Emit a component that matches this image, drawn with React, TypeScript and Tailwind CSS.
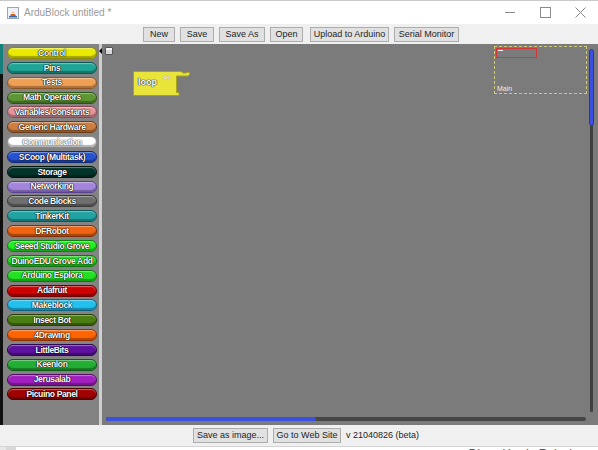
import React from "react";

const categories = [
  { name: "Control", bg: "bg-[#eaea00]", border: "border-[#8a8a00]" },
  { name: "Pins", bg: "bg-[#1fa596]", border: "border-[#0e5a52]" },
  { name: "Tests", bg: "bg-[#f0a055]", border: "border-[#8a5520]" },
  { name: "Math Operators", bg: "bg-[#5d9632]", border: "border-[#2f5515]" },
  { name: "Variables/Constants", bg: "bg-[#e4939b]", border: "border-[#8a4a52]" },
  { name: "Generic Hardware", bg: "bg-[#cd7d3e]", border: "border-[#6d3d15]" },
  { name: "Communication", bg: "bg-[#ffffff]", border: "border-[#8a8a8a]", light: true },
  { name: "SCoop (Multitask)", bg: "bg-[#2452d2]", border: "border-[#102a7a]" },
  { name: "Storage", bg: "bg-[#03332a]", border: "border-[#001510]" },
  { name: "Networking", bg: "bg-[#a385de]", border: "border-[#5a4090]" },
  { name: "Code Blocks", bg: "bg-[#6f6f6f]", border: "border-[#3a3a3a]" },
  { name: "TinkerKit", bg: "bg-[#22a3a3]", border: "border-[#0f5858]" },
  { name: "DFRobot", bg: "bg-[#ee6412]", border: "border-[#803008]" },
  { name: "Seeed Studio Grove", bg: "bg-[#22ee22]", border: "border-[#108010]" },
  { name: "DuinoEDU Grove Add", bg: "bg-[#22dd22]", border: "border-[#107510]" },
  { name: "Arduino Esplora", bg: "bg-[#22e022]", border: "border-[#107510]" },
  { name: "Adafruit", bg: "bg-[#cf0202]", border: "border-[#700000]" },
  { name: "Makeblock", bg: "bg-[#22c0ee]", border: "border-[#106080]" },
  { name: "Insect Bot", bg: "bg-[#4c7f12]", border: "border-[#254008]" },
  { name: "4Drawing", bg: "bg-[#ff6403]", border: "border-[#903000]" },
  { name: "LittleBits", bg: "bg-[#5e119e]", border: "border-[#2e0850]" },
  { name: "Keenlon", bg: "bg-[#22ae32]", border: "border-[#105a18]" },
  { name: "Jerusalab", bg: "bg-[#a21fc2]", border: "border-[#520f62]" },
  { name: "Picuino Panel", bg: "bg-[#a00202]", border: "border-[#500000]" },
];

function WinButton({ label, className = "" }: { label: string; className?: string }) {
  return (
    <div
      className={
        "h-[15px] flex items-center justify-center whitespace-nowrap bg-[#e1e1e1] border border-[#adadad] text-[9px] leading-none text-[#1e1e1e] " +
        className
      }
    >
      {label}
    </div>
  );
}

export default function App() {
  return (
    <div className="w-[598px] h-[450px] overflow-hidden bg-white flex flex-col font-['Liberation_Sans',sans-serif]">
      {/* title bar */}
      <div className="h-[24px] flex items-center border-t border-[#c8c8c8] bg-white">
        <div className="ml-[7px] w-[12px] h-[12px]">
          <svg width="12" height="12" viewBox="0 0 12 12">
            <rect x="0.5" y="0.5" width="11" height="11" fill="#eef2f8" stroke="#9aa6b8" />
            <path d="M3 9 L9 9 L8 7 L4 7 Z" fill="#e05a20" />
            <path d="M5 6 Q6 3 7 6 Z" fill="#f0a030" />
            <rect x="2" y="9" width="8" height="1.5" fill="#3a6ab0" />
          </svg>
        </div>
        <span className="ml-[5px] text-[10px] text-[#9a9a9a]">ArduBlock untitled *</span>
        <div className="ml-auto flex items-center gap-[24px] mr-[12px]">
          <svg width="11" height="11" viewBox="0 0 11 11">
            <path d="M0 5.5 H10" stroke="#8a8a8a" strokeWidth="1" />
          </svg>
          <svg width="11" height="11" viewBox="0 0 11 11">
            <rect x="0.5" y="0.5" width="10" height="10" fill="none" stroke="#8a8a8a" />
          </svg>
          <svg width="11" height="11" viewBox="0 0 11 11">
            <path d="M0.5 0.5 L10.5 10.5 M10.5 0.5 L0.5 10.5" stroke="#8a8a8a" strokeWidth="1" />
          </svg>
        </div>
      </div>

      {/* toolbar */}
      <div className="h-[20px] flex items-center bg-[#f0f0f0] pl-[143px] gap-[5px]">
        <WinButton label="New" className="w-[32px]" />
        <WinButton label="Save" className="w-[34px]" />
        <WinButton label="Save As" className="w-[46px]" />
        <WinButton label="Open" className="w-[33px]" />
        <WinButton label="Upload to Arduino" className="w-[79px] ml-[2px]" />
        <WinButton label="Serial Monitor" className="w-[65px]" />
      </div>

      {/* main */}
      <div className="h-[381px] flex">
        <div className="w-[3px] flex flex-col">
          <div className="h-[30px] bg-[#17807c]" />
          <div className="flex-1 bg-[#101010]" />
        </div>

        {/* palette */}
        <div className="w-[96px] bg-[#838383] flex flex-col gap-[2.85px] pt-[3px] pl-[4px]">
          {categories.map((c) => (
            <div
              key={c.name}
              className={
                "w-[90px] h-[12px] rounded-full border flex items-center justify-center overflow-hidden shadow-[inset_0_-2px_1px_rgba(0,0,0,0.3),inset_0_1px_1px_rgba(255,255,255,0.4)] " +
                c.bg +
                " " +
                c.border
              }
            >
              <span
                className={
                  "font-bold text-[8.5px] leading-none whitespace-nowrap text-white tracking-[-0.35px] " +
                  (c.light
                    ? "[text-shadow:0_0_1px_#666,0_0_1px_#666,0_0_1px_#666]"
                    : "[text-shadow:0_0_1px_#000,0_0_1px_#000,0_0_1px_#000]")
                }
              >
                {c.name}
              </span>
            </div>
          ))}
        </div>

        {/* splitter */}
        <div className="w-[3px] bg-[#cfcfcf] relative">
          <div className="absolute left-0 top-[4px] w-0 h-0 border-y-[3px] border-y-transparent border-r-[3px] border-r-black" />
        </div>

        {/* canvas */}
        <div className="flex-1 bg-[#7b7b7b] relative">
          <div className="absolute left-[3px] top-[3px] w-[8px] h-[8px] border border-[#555] bg-[#d8d8d8] rounded-[1px] shadow-[inset_0_2px_0_#f4f4f4]" />

          {/* loop block */}
          <div className="absolute left-[31px] top-[27px] w-[58px] h-[25px]">
            <svg width="58" height="25" viewBox="0 0 58 25" className="absolute inset-0">
              <path
                d="M0.5 0.5 H48 L50 2 H53 L56 1 L57 3 L55 5 H43.5 V21.5 H46 V24.5 H0.5 Z"
                fill="#e8e43a"
                stroke="#a8a21a"
                strokeWidth="1"
              />
            </svg>
            <span className="absolute left-[5px] top-[7px] text-[9px] font-bold leading-none text-white [text-shadow:0_0_1px_#333,0_0_1px_#333,0_0_1px_#333]">
              loop
            </span>
            <span className="absolute left-[30px] top-[3px] text-[6px] font-bold leading-none text-white [text-shadow:0_0_1px_#555]">
              do
            </span>
          </div>

          {/* minimap */}
          <div className="absolute left-[392px] top-[2px] w-[93px] h-[48px] border border-dashed border-[#cdc87a]">
            <div className="absolute left-[1px] top-[1px] w-[41px] h-[10px] border border-[#d23838]">
              <div className="w-[5px] h-[1px] bg-white ml-[1px] mt-[1px]" />
            </div>
            <span className="absolute left-[2px] bottom-[1px] text-[7px] leading-none text-[#eeeeee]">
              Main
            </span>
          </div>

          {/* vertical scroll */}
          <div className="absolute left-[488px] top-[68px] w-[3px] h-[300px] bg-[#3f3f3f] rounded-full" />
          <div className="absolute left-[487px] top-[5px] w-[5px] h-[77px] bg-[#3b4fe0] rounded-full border border-[#2a36a0]" />

          {/* horizontal scroll */}
          <div className="absolute left-[4px] top-[373px] w-[480px] h-[4px] bg-[#454545] rounded-full" />
          <div className="absolute left-[4px] top-[373px] w-[210px] h-[4px] bg-[#3b4fe0] rounded-full" />
        </div>
        <div className="w-[3px] bg-[#7b7b7b]" />
      </div>

      {/* bottom bar */}
      <div className="h-[22px] flex items-center bg-[#f0f0f0] pl-[193px] gap-[5px] border-b border-[#d4d4d4]">
        <WinButton label="Save as image..." className="w-[75px]" />
        <WinButton label="Go to Web Site" className="w-[68px]" />
        <span className="text-[9px] text-[#1e1e1e] whitespace-nowrap">v 21040826 (beta)</span>
      </div>

      {/* desktop behind */}
      <div className="flex-1 overflow-hidden flex">
        <div className="w-[13px] bg-[#e8e8e8]" />
        <div className="w-[22px] bg-[#d8d8d8]" />
        <div className="ml-[445px] text-[12px] leading-none mt-[1px] text-[#555] whitespace-nowrap">
          - Dirección de Relaciones
        </div>
      </div>
    </div>
  );
}
